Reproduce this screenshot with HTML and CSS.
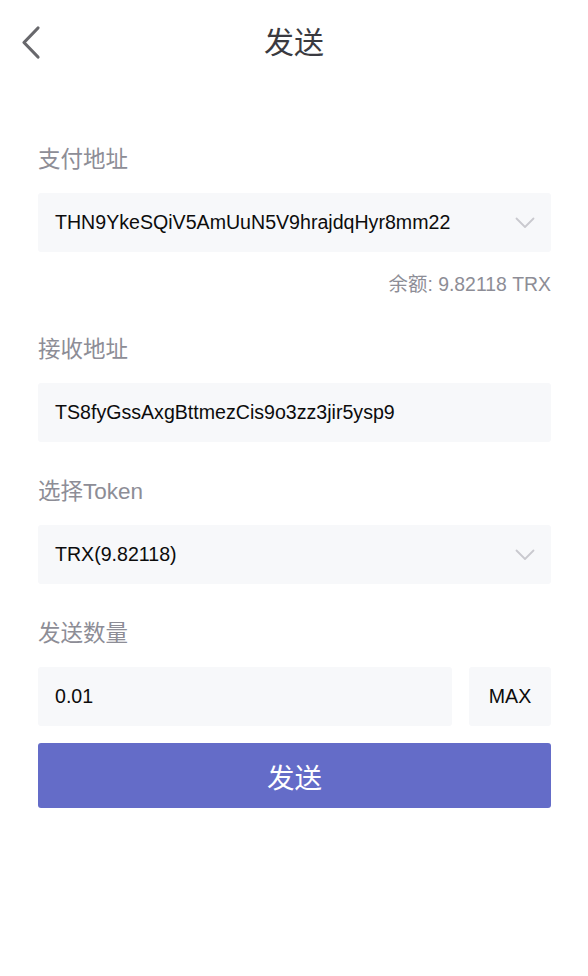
FILE: index.html
```html
<!DOCTYPE html>
<html lang="zh-CN">
<head>
<meta charset="utf-8">
<title>发送</title>
<link rel="stylesheet" href="styles.css">
</head>
<body>
<header class="topbar">
  <button class="back" aria-label="返回">
    <svg width="24" height="36" viewBox="0 0 24 36"><polyline points="19,4 5,18.5 19,33" fill="none" stroke="#68686c" stroke-width="3.2" stroke-linecap="round" stroke-linejoin="round"/></svg>
  </button>
  <h1 class="title">发送</h1>
  <span class="spacer"></span>
</header>
<main class="form">
  <section class="group first">
    <div class="label">支付地址</div>
    <div class="field select">
      <span class="value">THN9YkeSQiV5AmUuN5V9hrajdqHyr8mm22</span>
      <svg class="caret" width="20" height="12" viewBox="0 0 20 12"><polyline points="1.5,1.5 10,10 18.5,1.5" fill="none" stroke="#c9c9cf" stroke-width="1.8" stroke-linecap="round" stroke-linejoin="round"/></svg>
    </div>
    <div class="balance">余额: 9.82118 TRX</div>
  </section>
  <section class="group">
    <div class="label">接收地址</div>
    <div class="field">
      <span class="value">TS8fyGssAxgBttmezCis9o3zz3jir5ysp9</span>
    </div>
  </section>
  <section class="group">
    <div class="label">选择Token</div>
    <div class="field select">
      <span class="value">TRX(9.82118)</span>
      <svg class="caret" width="20" height="12" viewBox="0 0 20 12"><polyline points="1.5,1.5 10,10 18.5,1.5" fill="none" stroke="#c9c9cf" stroke-width="1.8" stroke-linecap="round" stroke-linejoin="round"/></svg>
    </div>
  </section>
  <section class="group">
    <div class="label">发送数量</div>
    <div class="amount-row">
      <div class="field amount"><span class="value">0.01</span></div>
      <div class="field max">MAX</div>
    </div>
    <button class="submit">发送</button>
  </section>
</main>
</body>
</html>
```
FILE: styles.css
```css
* { box-sizing: border-box; }
html, body {
  margin: 0;
  padding: 0;
  background: #ffffff;
  font-family: "Liberation Sans", "Noto Sans CJK SC", sans-serif;
}
.topbar {
  height: 80px;
  display: grid;
  grid-template-columns: 1fr auto 1fr;
  align-items: center;
}
.back {
  justify-self: start;
  margin-left: 19px;
  padding: 0;
  border: 0;
  background: none;
  display: flex;
  margin-top: 4px;
}
.title {
  margin: 0;
  font-family: "Noto Sans CJK SC", sans-serif;
  font-weight: 400;
  font-size: 30px;
  line-height: 36px;
  color: #3a3a40;
}
.form {
  padding: 0 37px 0 38px;
}
.group { margin-top: 36px; }
.group.first { margin-top: 66px; }
.label {
  font-family: "Liberation Sans", "Noto Sans CJK SC", sans-serif;
  font-size: 22.5px;
  line-height: 28px;
  color: #8d8d96;
  margin-bottom: 19px;
}
.field {
  height: 59px;
  background: #f7f8fa;
  border-radius: 3px;
  display: flex;
  align-items: center;
  padding: 0 16px 0 17px;
  font-size: 19.6px;
  color: #0c0c0c;
}
.field .value { flex: 1; }
.select .caret { margin-top: 1px; }
.balance {
  margin-top: 20px;
  padding-bottom: 4px;
  text-align: right;
  font-size: 19.4px;
  line-height: 24px;
  color: #8d8d96;
}
.amount-row {
  display: flex;
  gap: 17px;
}
.amount { flex: 1; }
.max {
  width: 82px;
  justify-content: center;
  padding: 0;
}
.submit {
  display: block;
  width: 100%;
  height: 65px;
  margin-top: 17px;
  border: 0;
  border-radius: 3px;
  background: #646cc8;
  color: #ffffff;
  font-family: "Noto Sans CJK SC", sans-serif;
  font-size: 27.5px;
  padding: 0;
}
```
